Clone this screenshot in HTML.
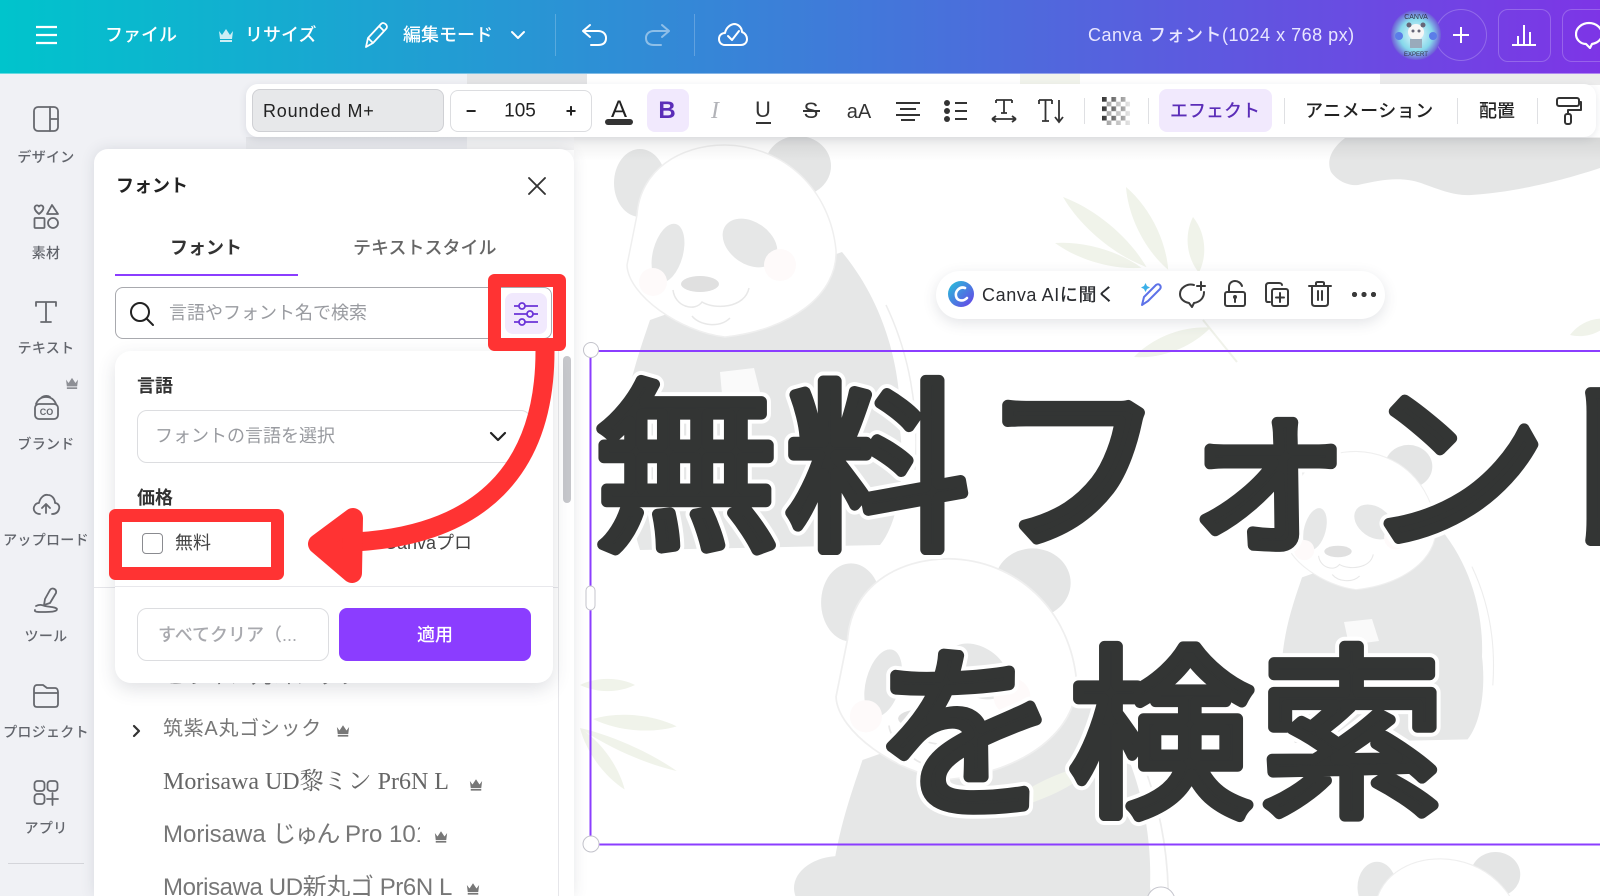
<!DOCTYPE html>
<html lang="ja"><head><meta charset="utf-8"><title>Canva フォント</title>
<style>
*{box-sizing:border-box;margin:0;padding:0}
html,body{width:1600px;height:896px;overflow:hidden;background:#f0f1f5}
body{position:relative;font-family:"Liberation Sans","Noto Sans CJK JP",sans-serif;color:#222}
.a{position:absolute}
.t{position:absolute;white-space:nowrap;line-height:1;transform:translateY(-50%)}
.c{transform:translate(-50%,-50%)}
svg{position:absolute;overflow:hidden}
.ic{fill:none;stroke:#3a3a3a;stroke-width:2;stroke-linecap:round;stroke-linejoin:round;overflow:visible}
.side{font-size:14px;color:#62656c;letter-spacing:.3px;font-weight:500}
.div{position:absolute;width:1px;background:#dfe0e3;top:98px;height:26px}
</style></head><body>

<!-- canvas -->
<div class="a" style="left:467px;top:74px;width:1133px;height:822px;background:#fff;overflow:hidden"></div>
<svg width="1600" height="896" style="left:0;top:0">
<defs>
<g id="p">
<path d="M650,320L842,252C890,310 902,380 900,430C905,470 900,520 880,545L640,550C625,500 615,470 622,440C625,390 640,350 650,320Z" fill="#e6e7e7"/>
<path d="M886,305C905,345 920,400 915,470" fill="none" stroke="#ededed" stroke-width="1.500"/>
<ellipse cx="640" cy="183" rx="26" ry="34" fill="#e6e7e7"/>
<ellipse cx="798" cy="166" rx="33" ry="30" fill="#e4e5e5"/>
<path d="M637,215C640,170 680,145 725,145C785,146 830,190 836,250C838,295 790,330 725,337C680,332 628,295 627,265Z" fill="#fff" stroke="#efefef" stroke-width="1.500"/>
<ellipse cx="668" cy="253" rx="15" ry="30" transform="rotate(15 668 253)" fill="#e6e7e7"/>
<ellipse cx="750" cy="243" rx="30" ry="21" transform="rotate(35 750 243)" fill="#e6e7e7"/>
<ellipse cx="700" cy="284" rx="19" ry="8" fill="#e0e0e0"/>
<path d="M673,290C675,307 695,312 702,302C715,310 745,308 749,288M692,316C700,326 720,328 730,318" fill="none" stroke="#e8e8e8" stroke-width="1.500"/>
<circle cx="653" cy="282" r="14" fill="#fefafa"/><circle cx="780" cy="265" r="16" fill="#fefafa"/>
</g>
<path id="l" d="M0,0C30,-9 70,-9 100,0C70,9 30,9 0,0Z" fill="#f0f3ea"/>
<linearGradient id="tg" x1="0" y1="0" x2="0" y2="1"><stop offset="0" stop-color="#000" stop-opacity=".07"/><stop offset="1" stop-color="#000" stop-opacity="0"/></linearGradient>
<linearGradient id="tb" x1="0" y1="0" x2="0" y2="1"><stop offset="0" stop-color="#e3e4e8"/><stop offset="1" stop-color="#ebecf0"/></linearGradient>
</defs>
<rect x="246" y="137" width="221" height="13" fill="url(#tb)"/>
<rect x="467" y="74" width="120" height="11" fill="#e5e5e6"/>
<rect x="467" y="137" width="107" height="13" fill="#f2f2f3"/>
<rect x="1020" y="74" width="60" height="11" fill="#f2f4ec"/>
<rect x="1380" y="74" width="220" height="11" fill="#ececec"/>
<path d="M1345,138C1332,148 1326,160 1331,172C1338,182 1350,186 1358,185C1380,180 1400,176 1421,183C1440,190 1455,196 1471,195C1520,192 1570,178 1600,168V138Z" fill="#e5e6e6"/>
<use href="#l" transform="translate(1063,197) rotate(40) scale(1.09,1.3)"/>
<use href="#l" transform="translate(1126,187) rotate(63) scale(.93,1.3)"/>
<use href="#l" transform="translate(1193,217) rotate(84) scale(.56,1.2)"/>
<use href="#l" transform="translate(1055,243) rotate(16) scale(.9,1.1)"/>
<use href="#l" transform="translate(1134,357) rotate(-21) scale(.82,1.3)"/>
<use href="#l" transform="translate(1570,335) rotate(-20) scale(.45,1)"/>
<path d="M1203,320L1237,362" stroke="#f0f2ea" stroke-width="2"/>
<use href="#l" transform="translate(580,685) scale(.55,.9)"/>
<use href="#l" transform="translate(593,719) rotate(5) scale(.84,1.1)"/>
<use href="#l" transform="translate(580,728) rotate(24) scale(1.06,.7)"/>
<use href="#l" transform="translate(580,728) rotate(54) scale(.76,1)"/>
<use href="#p"/>
<path d="M720,372l34,-4l10,40l-40,8z" fill="#fafafa"/>
<use href="#p" transform="translate(115,392) scale(1.15)"/>
<ellipse cx="840" cy="888" rx="46" ry="32" fill="#e6e7e7"/>
<use href="#p" transform="translate(834,347) scale(.72)"/>
<path d="M1344,622l28,-3l7,22l-30,4z" fill="#fafafa"/>
<use href="#p" transform="translate(897,750) scale(.75)"/>
<use href="#l" transform="translate(1000,810) rotate(-25) scale(1.1,1.2)"/>
<rect x="574" y="137" width="1026" height="24" fill="url(#tg)"/>
<g font-family="Noto Sans CJK JP,sans-serif" font-weight="400" font-size="184" stroke-linejoin="round" stroke-linecap="round">
<text x="594 785 981 1173 1363 1530" y="535" fill="#fff" stroke="#fff" stroke-width="19">無料フォント</text>
<text x="874 1069 1260" y="801" fill="#fff" stroke="#fff" stroke-width="19">を検索</text>
<text x="594 785 981 1173 1363 1530" y="535" fill="#333534" stroke="#333534" stroke-width="11">無料フォント</text>
<text x="874 1069 1260" y="801" fill="#333534" stroke="#333534" stroke-width="11">を検索</text>
</g>
<rect x="590.500" y="351" width="1020" height="493.500" fill="none" stroke="#8b3dff" stroke-width="2"/>
<circle cx="591" cy="350" r="7.500" fill="#fff" stroke="#c4c4cc" stroke-width="1"/>
<circle cx="591" cy="844" r="8" fill="#fff" stroke="#c4c4cc" stroke-width="1"/>
<rect x="586" y="586" width="9" height="24" rx="4.500" fill="#fff" stroke="#c4c4cc"/>
<circle cx="1161" cy="901" r="14" fill="#fff" stroke="#c4c4cc"/>
</svg>

<!-- canva AI pill -->
<div class="a" style="left:936px;top:271px;width:449px;height:48px;border-radius:24px;background:#fff;box-shadow:0 4px 14px rgba(60,66,87,.14)"></div>
<svg width="26" height="26" style="left:948px;top:281px" viewBox="0 0 26 26"><defs><linearGradient id="ai" x1="0" y1="0" x2="1" y2="1"><stop offset="0" stop-color="#25c5d8"/><stop offset="1" stop-color="#6a3de8"/></linearGradient></defs><circle cx="13" cy="13" r="13" fill="url(#ai)"/><path d="M17,7C12,5 7,10 8,15C9,20 15,21 19,17" fill="none" stroke="#fff" stroke-width="2.600" stroke-linecap="round"/></svg>
<div class="t" style="left:982px;top:295px;font-size:18px;font-weight:500;color:#2a2c30;letter-spacing:.6px">Canva AIに聞く</div>
<svg width="28" height="28" style="left:1136px;top:280px" viewBox="0 0 28 28"><path d="M6,25L8,17L20,5C23,3 26,6 24,9L12,21Z" fill="none" stroke="#5d72e8" stroke-width="2" stroke-linejoin="round"/><path d="M8,6l1.500,-3l1.500,3l3,1.500l-3,1.500l-1.500,3l-1.500,-3l-3,-1.500z" fill="#3bb0e8"/></svg>
<svg class="ic" width="28" height="28" style="left:1178px;top:280px" viewBox="0 0 28 28"><path d="M16,5C9,3 2,8 2,14C2,19 6,22 11,23L14,27L16,23C22,22 26,18 26,12"/><path d="M23,2v8M19,6h8"/></svg>
<svg class="ic" width="26" height="28" style="left:1222px;top:279px" viewBox="0 0 26 28"><rect x="3" y="13" width="20" height="14" rx="2"/><path d="M7,13V8C7,4 10,2 13,2C16,2 19,4 20,7"/><path d="M13,18v5"/><circle cx="13" cy="18" r="1" fill="#3a3a3a"/></svg>
<svg class="ic" width="26" height="26" style="left:1264px;top:282px" viewBox="0 0 26 26"><path d="M6,20H4C2,20 2,19 2,17V4C2,2 3,1 5,1H15C17,1 18,2 18,3"/><rect x="8" y="7" width="16" height="17" rx="2"/><path d="M16,11v9M12,15.500h8"/></svg>
<svg class="ic" width="26" height="28" style="left:1307px;top:280px" viewBox="0 0 26 28"><path d="M2,6H24M9,6V3C9,2 10,2 11,2H15C16,2 17,2 17,3V6M5,6V23C5,25 6,26 8,26H18C20,26 21,25 21,23V6M11,11V20M15,11V20"/></svg>
<div class="a" style="left:1352px;top:292px;width:24px;height:5px;background:radial-gradient(circle at 2.500px 2.500px,#3a3a3a 2.400px,transparent 2.800px) 0 0/9.500px 5px repeat-x"></div>

<!-- topbar -->
<div class="a" style="left:0;top:0;width:1600px;height:74px;background:linear-gradient(90deg,#00c4cc 0%,#3f7bd9 52%,#7d35e6 100%);border-bottom:1px solid rgba(255,255,255,.4)"></div>
<svg width="24" height="20" style="left:35px;top:25px" fill="none" stroke="#fff" stroke-width="2.200"><path d="M1,2H22M1,10H22M1,18H22"/></svg>
<div class="t" style="left:105px;top:35px;font-size:18px;font-weight:500;color:#fff">ファイル</div>
<svg width="16" height="14" style="left:218px;top:28px" viewBox="0 0 16 14"><path d="M1,3L4,7L8,1L12,7L15,3L14,11H2Z" fill="#cdeef4"/><rect x="2" y="12" width="12" height="2" fill="#cdeef4"/></svg>
<div class="t" style="left:245px;top:35px;font-size:18px;font-weight:500;color:#fff">リサイズ</div>
<svg width="28" height="28" style="left:363px;top:21px" viewBox="0 0 28 28" fill="none" stroke="#fff" stroke-width="1.800" stroke-linejoin="round"><path d="M3,26L5,17L18,3C21,0 26,5 23,8L10,22Z"/><path d="M5,17L10,22M16,5L21,10"/></svg>
<div class="t" style="left:403px;top:35px;font-size:18px;font-weight:500;color:#fff">編集モード</div>
<svg width="16" height="10" style="left:510px;top:30px" fill="none" stroke="#fff" stroke-width="2" stroke-linecap="round" stroke-linejoin="round"><path d="M2,2L8,8L14,2"/></svg>
<div class="a" style="left:555px;top:14px;width:1px;height:42px;background:rgba(255,255,255,.22)"></div>
<svg width="28" height="26" style="left:581px;top:22px" viewBox="0 0 28 26" fill="none" stroke="#fff" stroke-width="2" stroke-linecap="round" stroke-linejoin="round"><path d="M9,3L2,9L9,15M2,9H17C22,9 25,12 25,16C25,21 22,23 17,23H10"/></svg>
<svg width="28" height="26" style="left:643px;top:22px" viewBox="0 0 28 26" fill="none" stroke="rgba(255,255,255,.45)" stroke-width="2" stroke-linecap="round" stroke-linejoin="round"><path d="M19,3L26,9L19,15M26,9H11C6,9 3,12 3,16C3,21 6,23 11,23H18"/></svg>
<div class="a" style="left:694px;top:14px;width:1px;height:42px;background:rgba(255,255,255,.22)"></div>
<svg width="30" height="26" style="left:718px;top:22px" viewBox="0 0 30 26" fill="none" stroke="#fff" stroke-width="2" stroke-linecap="round" stroke-linejoin="round"><path d="M7,23C3,23 1,20 1,17C1,13 4,11 7,11C8,6 12,2 17,2C22,3 24,7 24,10C27,11 29,14 29,17C29,21 26,23 23,23Z"/><path d="M10,14L14,18L21,9"/></svg>
<div class="t" style="left:1088px;top:35px;font-size:18px;color:#e8e6ff;font-weight:500;letter-spacing:.5px">Canva フォント(1024 x 768 px)</div>
<div class="a" style="left:1435px;top:9px;width:52px;height:52px;border-radius:50%;border:1px solid rgba(255,255,255,.22)"></div>
<svg width="50" height="50" style="left:1391px;top:10px" viewBox="0 0 50 50"><defs><radialGradient id="av"><stop offset="0" stop-color="#eafaff"/><stop offset=".65" stop-color="#86d8ea"/><stop offset="1" stop-color="#6e58d8"/></radialGradient></defs><circle cx="25" cy="25" r="25" fill="url(#av)"/><circle cx="25" cy="22" r="8" fill="#f6f6f6"/><circle cx="18" cy="15" r="2.500" fill="#667"/><circle cx="32" cy="15" r="2.500" fill="#667"/><circle cx="22" cy="21" r="1.500" fill="#667"/><circle cx="28" cy="21" r="1.500" fill="#667"/><path d="M19,29h12v9h-12z" fill="#9ab"/><circle cx="8" cy="26" r="4" fill="#5b7de8"/><circle cx="42" cy="26" r="4" fill="#5b7de8"/><text x="25" y="9" font-size="7" text-anchor="middle" fill="#334">CANVA</text><text x="25" y="46" font-size="6" text-anchor="middle" fill="#334">EXPERT</text></svg>
<svg width="18" height="18" style="left:1452px;top:26px" fill="none" stroke="#fff" stroke-width="2"><path d="M9,1V17M1,9H17"/></svg>
<div class="a" style="left:1498px;top:9px;width:53px;height:53px;border-radius:10px;border:1px solid rgba(255,255,255,.22)"></div>
<svg width="26" height="24" style="left:1511px;top:23px" fill="none" stroke="#fff" stroke-width="2"><path d="M1,22H25M7,22V13M13,22V2M19,22V9"/></svg>
<div class="a" style="left:1562px;top:9px;width:38px;height:53px;border-radius:10px 0 0 10px;border:1px solid rgba(255,255,255,.22);border-right:0"></div>
<svg width="25" height="28" style="left:1575px;top:21px" fill="none" stroke="#fff" stroke-width="2.200" stroke-linejoin="round"><path d="M14,2C7,2 1,7 1,13C1,19 6,23 11,23L15,27L17,23C22,22 27,19 27,13C27,7 21,2 14,2Z"/></svg>

<!-- toolbar -->
<div class="a" style="left:246px;top:84px;width:1350px;height:53px;background:#fff;border-radius:12px;box-shadow:0 2px 8px rgba(60,66,87,.12)"></div>
<div class="a" style="left:252px;top:89px;width:192px;height:43px;background:#e7e8ea;border:1px solid #cfd0d4;border-radius:8px"></div>
<div class="t" style="left:263px;top:111px;font-size:18px;font-weight:500;color:#222;letter-spacing:.8px">Rounded M+</div>
<div class="a" style="left:450px;top:90px;width:142px;height:42px;border:1px solid #dcdde0;border-radius:8px"></div>
<div class="t c" style="left:471px;top:111px;font-size:18px;font-weight:700">−</div>
<div class="t c" style="left:520px;top:111px;font-size:19px;font-weight:500">105</div>
<div class="t c" style="left:571px;top:111px;font-size:18px;font-weight:700">+</div>
<div class="t c" style="left:619px;top:110px;font-size:24px;color:#222">A</div>
<div class="a" style="left:605px;top:119px;width:28px;height:6px;background:#333;border-radius:3px"></div>
<div class="a" style="left:647px;top:89px;width:42px;height:43px;background:#f1e9fd;border-radius:8px"></div>
<div class="t c" style="left:667px;top:111px;font-size:24px;font-weight:700;color:#5b2db8">B</div>
<div class="t c" style="left:715px;top:111px;font-size:24px;font-style:italic;color:#b2b3b8;font-family:'Liberation Serif',serif">I</div>
<div class="t c" style="left:763px;top:110px;font-size:22px;color:#333">U</div>
<div class="a" style="left:756px;top:122px;width:15px;height:2px;background:#333"></div>
<div class="t c" style="left:811px;top:111px;font-size:22px;color:#333">S</div>
<div class="a" style="left:803px;top:110px;width:17px;height:1.500px;background:#333"></div>
<div class="t c" style="left:859px;top:112px;font-size:20px;color:#333">aA</div>
<svg width="26" height="20" style="left:895px;top:101px" fill="none" stroke="#333" stroke-width="2"><path d="M1,2H25M5,8H21M1,14H25M6,19H20"/></svg>
<svg width="24" height="22" style="left:944px;top:100px"><g fill="#333"><circle cx="3" cy="3" r="3"/><circle cx="3" cy="11" r="3"/><circle cx="3" cy="19" r="3"/><rect x="11" y="2" width="12" height="2"/><rect x="11" y="10" width="12" height="2"/><rect x="11" y="18" width="12" height="2"/></g></svg>
<svg width="26" height="26" style="left:991px;top:98px" fill="none" stroke="#333" stroke-width="1.800"><path d="M5,2H21M5,2V5M21,2V5M13,2V15M10,15H16M1,21H25M1,21L5,18M1,21L5,24M25,21L21,18M25,21L21,24"/></svg>
<svg width="28" height="26" style="left:1038px;top:98px" fill="none" stroke="#333" stroke-width="1.800"><path d="M1,2H14M1,2V6M14,2V6M7.500,2V23M4,23H11M21,2V23M17,19L21,24L25,19"/></svg>
<div class="div" style="left:1084px"></div>
<svg width="28" height="28" style="left:1102px;top:97px"><defs><pattern id="ck" width="9.400" height="9.400" patternUnits="userSpaceOnUse"><rect width="4.700" height="4.700" fill="#333"/><rect x="4.700" y="4.700" width="4.700" height="4.700" fill="#999"/></pattern><linearGradient id="ckf" x1="0" y1="0" x2="1" y2="0"><stop offset="0" stop-color="#fff" stop-opacity="0"/><stop offset="1" stop-color="#fff" stop-opacity=".75"/></linearGradient></defs><rect width="28" height="28" fill="url(#ck)"/><rect width="28" height="28" fill="url(#ckf)"/></svg>
<div class="div" style="left:1148px"></div>
<div class="a" style="left:1159px;top:89px;width:113px;height:43px;background:#f1e9fd;border-radius:8px"></div>
<div class="t c" style="left:1215px;top:111px;font-size:18px;font-weight:500;color:#5b2db8">エフェクト</div>
<div class="div" style="left:1284px"></div>
<div class="t" style="left:1305px;top:111px;font-size:18px;font-weight:500;color:#222;letter-spacing:.5px">アニメーション</div>
<div class="div" style="left:1457px"></div>
<div class="t" style="left:1479px;top:111px;font-size:18px;font-weight:500;color:#222">配置</div>
<div class="div" style="left:1537px"></div>
<svg width="26" height="28" style="left:1556px;top:97px" fill="none" stroke="#333" stroke-width="2" stroke-linejoin="round"><rect x="1" y="1" width="22" height="8" rx="2"/><path d="M23,5H25V13H12V17"/><rect x="9" y="17" width="6" height="10" rx="2"/></svg>

<!-- sidebar -->
<div class="a" style="left:0;top:74px;width:94px;height:822px;background:#f0f1f5"></div>
<svg class="ic" width="94" height="896" style="left:0;top:0;stroke:#66686e;stroke-width:1.800">
<rect x="34" y="107" width="24" height="24" rx="4"/><path d="M50,107V131M50,119H58"/>
<path d="M39,214C35,211 34,208 35,206.500C36,205 38,205 39,206.500C40,205 42,205 43,206.500C44,208 43,211 39,214Z"/><path d="M52,205L58,214H47Z"/><rect x="34.500" y="218" width="10" height="10" rx="1"/><circle cx="53" cy="223" r="5"/>
<path d="M36,306V302H56V306M46,302V322M41,322H51"/>
<rect x="35" y="404" width="23" height="15" rx="4"/><path d="M36,404C38,399 42,397 46,397C50,397 54,399 56,404M41,398C43,396 47,395 50,397"/>
<text x="46.500" y="415" font-size="9" font-weight="700" text-anchor="middle" fill="#66686e" stroke="none">CO</text>
<path d="M40,514C35,514 33,510 34,507C35,504 37,503 39,503C40,498 44,494 48,495C52,495 55,499 55,503C58,503 60,506 59,509C58,513 55,514 52,514M46,513V505M42,508L46,504L50,508"/>
<path d="M50,590C52,587 57,589 56,593L50,603L44,605L45,599Z"/><path d="M36,606C40,604 42,605 45,606C50,607 56,607 57,609C57,612 50,612 42,612C38,612 34,612 35,610"/>
<path d="M34,689C34,687 35,685 37,685H43L47,688H55C57,688 58,690 58,692V704C58,706 57,707 55,707H37C35,707 34,706 34,704ZM34,693H58"/>
<rect x="34.500" y="781" width="10" height="10" rx="3"/><rect x="47.500" y="781" width="10" height="10" rx="3"/><rect x="34.500" y="794" width="10" height="10" rx="3"/><path d="M52.500,793V805M47,799H58"/>
</svg>
<div class="t c side" style="left:46px;top:157px">デザイン</div>
<div class="t c side" style="left:46px;top:253px">素材</div>
<div class="t c side" style="left:46px;top:348px">テキスト</div>
<div class="t c side" style="left:46px;top:444px">ブランド</div>
<div class="t c side" style="left:46px;top:540px">アップロード</div>
<div class="t c side" style="left:46px;top:636px">ツール</div>
<div class="t c side" style="left:46px;top:732px">プロジェクト</div>
<div class="t c side" style="left:46px;top:828px">アプリ</div>
<svg width="14" height="12" style="left:65px;top:377px" viewBox="0 0 16 14"><path d="M1,3L4,7L8,1L12,7L15,3L14,11H2Z" fill="#8d8f95"/><rect x="2" y="12" width="12" height="2" fill="#8d8f95"/></svg>
<div class="a" style="left:8px;top:863px;width:76px;height:1px;background:#d4d5da"></div>

<!-- panel -->
<div class="a" style="left:94px;top:149px;width:480px;height:747px;background:#fff;border-radius:14px 14px 0 0;box-shadow:0 0 14px rgba(60,66,87,.13)"></div>
<div class="a" style="left:558px;top:351px;width:1px;height:545px;background:#e6e6ea"></div>
<div class="t" style="left:116px;top:186px;font-size:18px;font-weight:700;color:#222">フォント</div>
<svg width="20" height="20" style="left:527px;top:176px" fill="none" stroke="#333" stroke-width="1.900" stroke-linecap="round"><path d="M2,2L18,18M18,2L2,18"/></svg>
<div class="t c" style="left:206px;top:248px;font-size:18px;font-weight:700;color:#333">フォント</div>
<div class="t" style="left:353px;top:248px;font-size:18px;font-weight:500;color:#666">テキストスタイル</div>
<div class="a" style="left:115px;top:274px;width:183px;height:2px;background:#8b3dff"></div>
<div class="a" style="left:115px;top:287px;width:437px;height:52px;border:1px solid #a8a9ae;border-radius:8px;background:#fff"></div>
<svg width="26" height="26" style="left:129px;top:301px" fill="none" stroke="#222" stroke-width="2" stroke-linecap="round"><circle cx="11" cy="11" r="9"/><path d="M17.500,17.500L24,24"/></svg>
<div class="t" style="left:169px;top:313px;font-size:18px;color:#999ba0">言語やフォント名で検索</div>
<div class="a" style="left:505px;top:293px;width:42px;height:41px;background:#f1e9fd;border-radius:8px"></div>
<svg width="26" height="24" style="left:513px;top:302px" fill="none" stroke="#6b34d8" stroke-width="1.800"><path d="M1,4H25M1,12H25M1,20H25"/><circle cx="9" cy="4" r="3" fill="#f1e9fd"/><circle cx="17" cy="12" r="3" fill="#f1e9fd"/><circle cx="9" cy="20" r="3" fill="#f1e9fd"/></svg>
<div class="a" style="left:563px;top:356px;width:8px;height:147px;background:#c6c7cb;border-radius:4px"></div>
<div class="a" style="left:94px;top:587px;width:464px;height:1px;background:#e6e6ea"></div>

<!-- list -->
<div class="t" style="left:164px;top:677px;font-size:20px;color:#777;letter-spacing:2px">ヒラギノ丸ゴシック Pro W4</div>
<svg width="10" height="14" style="left:132px;top:724px" fill="none" stroke="#333" stroke-width="2.200" stroke-linecap="round" stroke-linejoin="round"><path d="M2,2L7,7L2,12"/></svg>
<div class="t" style="left:163px;top:729px;font-size:20px;color:#777;letter-spacing:.7px">筑紫A丸ゴシック</div>
<div class="t" style="left:163px;top:782px;font-size:24px;color:#666;font-family:'Liberation Serif','Noto Serif CJK SC',serif">Morisawa UD黎ミン Pr6N L</div>
<div class="a" style="left:163px;top:816px;width:257px;height:38px;overflow:hidden"><div class="t" style="left:0;top:19px;font-size:24px;color:#777">Morisawa <span style="letter-spacing:-2px">じゅん</span> Pro 101</div></div>
<div class="a" style="left:163px;top:869px;width:300px;height:27px;overflow:hidden"><div class="t" style="left:0;top:19px;font-size:24px;color:#777;letter-spacing:-.4px">Morisawa UD新丸ゴ Pr6N L</div></div>
<svg width="14" height="13" style="left:336px;top:724px" viewBox="0 0 16 14"><path d="M1,3L4,7L8,1L12,7L15,3L14,11H2Z" fill="#777"/><rect x="2" y="12" width="12" height="2" fill="#777"/></svg>
<svg width="14" height="13" style="left:469px;top:778px" viewBox="0 0 16 14"><path d="M1,3L4,7L8,1L12,7L15,3L14,11H2Z" fill="#777"/><rect x="2" y="12" width="12" height="2" fill="#777"/></svg>
<svg width="14" height="13" style="left:434px;top:830px" viewBox="0 0 16 14"><path d="M1,3L4,7L8,1L12,7L15,3L14,11H2Z" fill="#777"/><rect x="2" y="12" width="12" height="2" fill="#777"/></svg>
<svg width="14" height="13" style="left:466px;top:882px" viewBox="0 0 16 14"><path d="M1,3L4,7L8,1L12,7L15,3L14,11H2Z" fill="#777"/><rect x="2" y="12" width="12" height="2" fill="#777"/></svg>

<!-- popup -->
<div class="a" style="left:115px;top:351px;width:438px;height:332px;background:#fff;border-radius:16px;box-shadow:0 6px 18px rgba(60,66,87,.16)"></div>
<div class="a" style="left:115px;top:586px;width:438px;height:1px;background:#e8e8ec"></div>
<div class="t" style="left:137px;top:386px;font-size:18px;font-weight:700;color:#333">言語</div>
<div class="a" style="left:137px;top:410px;width:394px;height:53px;border:1px solid #dcdde0;border-radius:10px"></div>
<div class="t" style="left:155px;top:436px;font-size:18px;color:#999ba0">フォントの言語を選択</div>
<svg width="18" height="11" style="left:489px;top:431px" fill="none" stroke="#222" stroke-width="2.200" stroke-linecap="round" stroke-linejoin="round"><path d="M2,2L9,9L16,2"/></svg>
<div class="t" style="left:137px;top:498px;font-size:18px;font-weight:700;color:#333">価格</div>
<div class="a" style="left:142px;top:533px;width:21px;height:21px;border:1px solid #8a8b90;border-radius:4px;background:#fff"></div>
<div class="t" style="left:175px;top:543px;font-size:18px;color:#444">無料</div>
<div class="t" style="left:384px;top:543px;font-size:18px;color:#444">Canvaプロ</div>
<div class="a" style="left:137px;top:608px;width:192px;height:53px;border:1px solid #dcdde0;border-radius:10px"></div>
<div class="t" style="left:158px;top:635px;font-size:18px;color:#a8a9ae;font-weight:500">すべてクリア（...</div>
<div class="a" style="left:339px;top:608px;width:192px;height:53px;background:#8b3dff;border-radius:8px"></div>
<div class="t c" style="left:435px;top:635px;font-size:18px;color:#fff;font-weight:500">適用</div>

<!-- red annotations -->
<svg width="1600" height="896" style="left:0;top:0">
<rect x="494.500" y="280.500" width="65" height="64" fill="none" stroke="#ff3333" stroke-width="13" stroke-linejoin="round"/>
<rect x="115.500" y="515.500" width="162" height="58" fill="none" stroke="#ff3333" stroke-width="13" stroke-linejoin="round"/>
<path d="M545,351C545,470 480,535 355,542" fill="none" stroke="#ff3333" stroke-width="19"/>
<path d="M353,518L318,544L352,573Z" fill="#ff3333" stroke="#ff3333" stroke-width="20" stroke-linejoin="round"/>
</svg>
</body></html>
